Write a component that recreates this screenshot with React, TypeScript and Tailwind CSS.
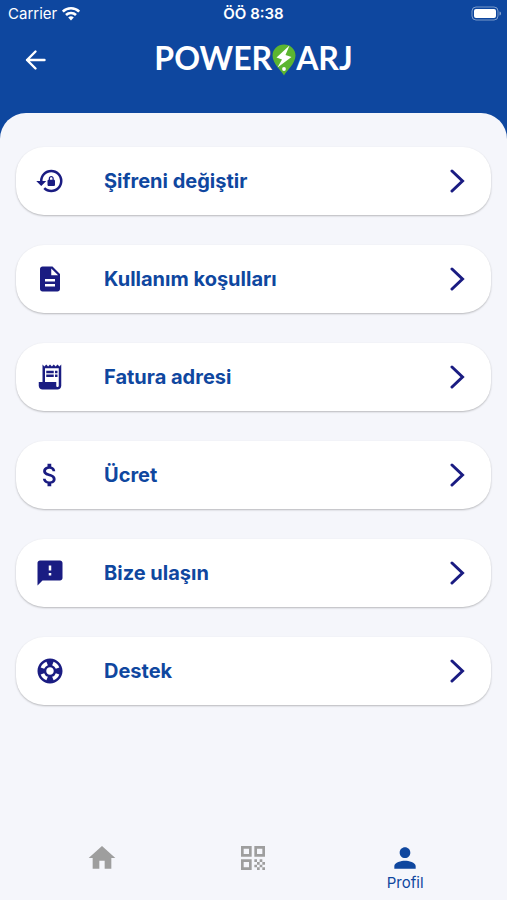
import type { IconType } from "react-icons";
import {
	MdAttachMoney,
	MdDescription,
	MdFeedback,
	MdHome,
	MdLockReset,
	MdPerson,
	MdQrCode,
	MdReceiptLong,
	MdSupport,
} from "react-icons/md";

const menu: { label: string; icon: IconType }[] = [
	{ label: "Şifreni değiştir", icon: MdLockReset },
	{ label: "Kullanım koşulları", icon: MdDescription },
	{ label: "Fatura adresi", icon: MdReceiptLong },
	{ label: "Ücret", icon: MdAttachMoney },
	{ label: "Bize ulaşın", icon: MdFeedback },
	{ label: "Destek", icon: MdSupport },
];

const Wifi = () => (
	<svg className="h-4 w-5" viewBox="0 0 20 16" fill="none" stroke="currentColor" strokeWidth="2.6">
		<path d="M1.8 5.7a11.6 11.6 0 0 1 16.4 0" />
		<path d="M5 9a7.1 7.1 0 0 1 10 0" />
		<path d="M10 14.5l-2.8-2.9a4 4 0 0 1 5.6 0z" fill="currentColor" stroke="none" />
	</svg>
);

const Battery = () => (
	<svg className="h-4 w-8" viewBox="0 0 32 16" fill="none">
		<rect x="1" y="1" width="26" height="13" rx="4" stroke="#fff" strokeOpacity="0.45" />
		<rect x="3" y="3" width="22" height="9" rx="2" fill="#fff" />
		<path d="M28.5 5.5c2 .6 2 3.4 0 4z" fill="#fff" fillOpacity="0.5" />
	</svg>
);

const StatusBar = () => (
	<div className="grid grid-cols-3 items-center px-1 h-7">
		<div className="flex items-center gap-1 pl-1">
			<span className="text-[15px]">Carrier</span>
			<Wifi />
		</div>
		<span className="text-center text-[15px] font-semibold">ÖÖ 8:38</span>
		<div className="flex justify-end">
			<Battery />
		</div>
	</div>
);

const Pin = () => (
	<svg className="h-8 w-6" viewBox="0 0 24 32">
		<path d="M12 31.5C10 27 .5 20 .5 11.5a11.5 11 0 0 1 23 0C23.5 20 14 27 12 31.5z" fill="#5cb531" />
		<path d="M17.5 1.5L4.5 13.5l5.5 2L5.5 23.5 19.5 13l-6-2z" fill="#fff" />
		<circle cx="12" cy="25" r="1.9" fill="#fff" />
	</svg>
);

const Logo = () => (
	<h1 className="flex items-center font-['Lato',sans-serif] text-[32px] leading-7 font-bold">
		<span className="pb-1">POWER</span>
		<Pin />
		<span className="pb-1">ARJ</span>
	</h1>
);

const Header = () => (
	<header className="text-white">
		<StatusBar />
		<div className="grid grid-cols-[70px_1fr_70px] items-center pt-4">
			<button type="button" aria-label="Geri" className="pl-6">
				<svg className="size-6" viewBox="0 0 24 24" fill="none" stroke="currentColor" strokeWidth="2.4" strokeLinecap="round" strokeLinejoin="round">
					<path d="M20.5 12H3M11.5 3.5L3 12l8.5 8.5" />
				</svg>
			</button>
			<div className="flex justify-center">
				<Logo />
			</div>
		</div>
	</header>
);

const MenuItem = ({ label, icon: Icon }: { label: string; icon: IconType }) => (
	<li>
		<button
			type="button"
			className="flex w-full h-[68px] items-center rounded-[28px] bg-white pl-[19px] pr-6 text-left shadow-[0_1px_2px_rgba(0,0,0,0.25)]"
		>
			<Icon className="size-[30px] text-[#1a1c82]" />
			<span className="grow pl-[39px] text-xl font-bold text-[#0f479f]">{label}</span>
			<svg className="h-6 w-5 text-[#1a1c82]" viewBox="0 0 20 24" fill="none" stroke="currentColor" strokeWidth="3" strokeLinecap="round" strokeLinejoin="miter">
				<path d="M5 2l10.5 10L5 22" />
			</svg>
		</button>
	</li>
);

const BottomNav = () => (
	<nav className="grid grid-cols-3 px-[26px] h-[58px] text-[#9e9e9e]">
		<a href="#home" aria-label="Ana sayfa" className="flex flex-col items-center">
			<MdHome className="size-8" />
		</a>
		<a href="#qr" aria-label="QR kod" className="flex flex-col items-center">
			<MdQrCode className="size-8" />
		</a>
		<a href="#profile" className="flex flex-col items-center text-[#0f479f]">
			<MdPerson className="size-8" />
			<span className="text-[15px] leading-[18px]">Profil</span>
		</a>
	</nav>
);

const App = () => {
	return (
		<div className="flex min-h-screen flex-col bg-[#0e479f] font-['Inter',sans-serif]">
			<Header />
			<main className="mt-[37px] flex grow flex-col justify-between rounded-t-[26px] bg-[#f5f6fb]">
				<ul className="flex flex-col gap-[30px] px-4 pt-[34px]">
					{menu.map((item) => (
						<MenuItem key={item.label} {...item} />
					))}
				</ul>
				<BottomNav />
			</main>
		</div>
	);
};

export default App;
